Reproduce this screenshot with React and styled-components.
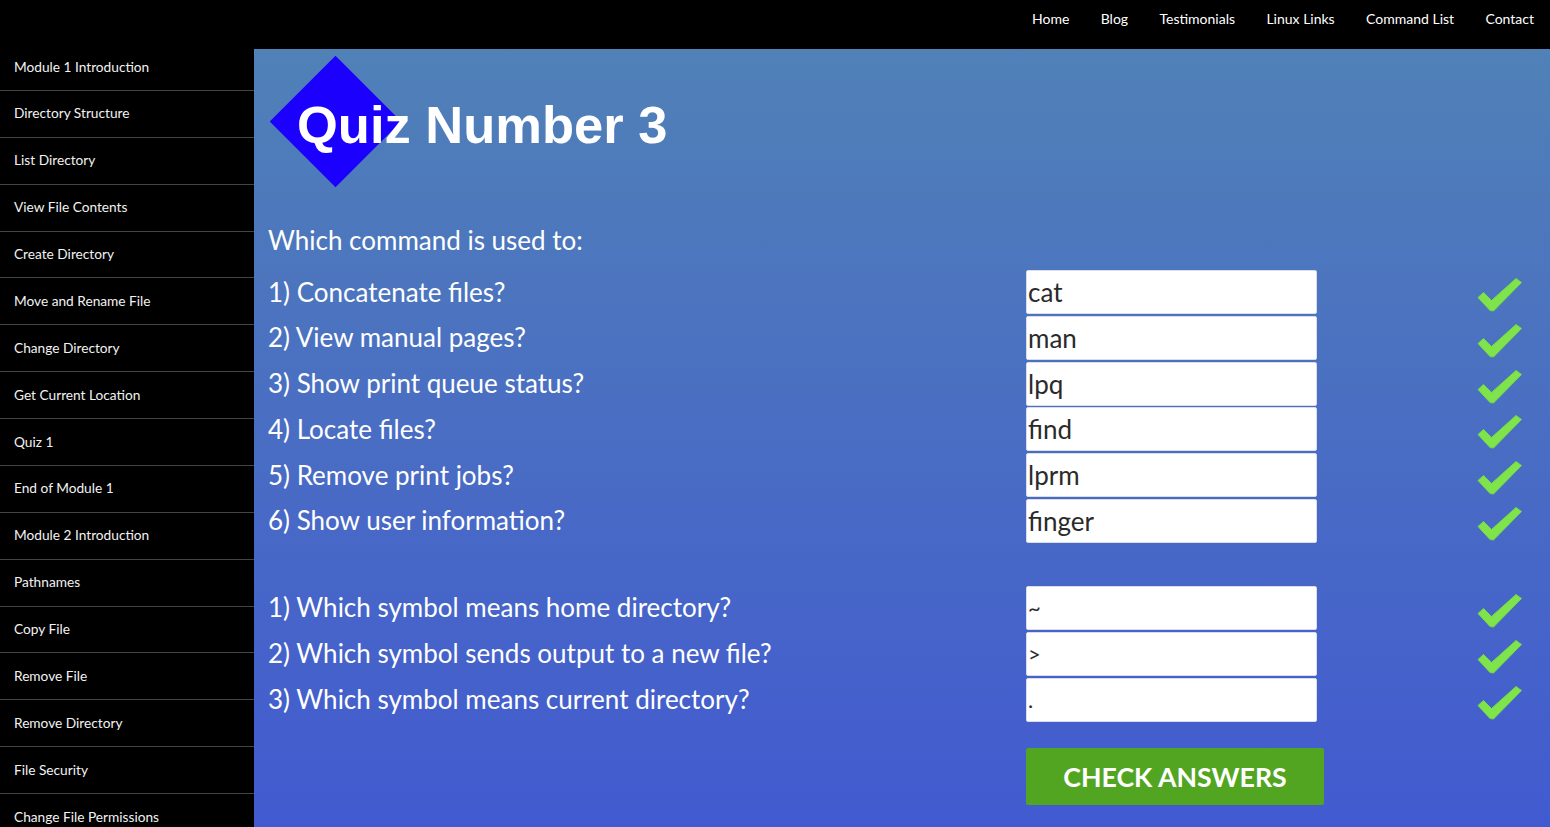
import styled, { createGlobalStyle } from "styled-components";

const GlobalStyle = createGlobalStyle`
  html, body {
    margin: 0;
    padding: 0;
    height: 100%;
    overflow: hidden;
    background: #000;
    font-family: Lato, "Liberation Sans", sans-serif;
  }
  #root {
    height: 100%;
  }
`;

const navLinks = ["Home", "Blog", "Testimonials", "Linux Links", "Command List", "Contact"];

const menu = [
  "Module 1 Introduction",
  "Directory Structure",
  "List Directory",
  "View File Contents",
  "Create Directory",
  "Move and Rename File",
  "Change Directory",
  "Get Current Location",
  "Quiz 1",
  "End of Module 1",
  "Module 2 Introduction",
  "Pathnames",
  "Copy File",
  "Remove File",
  "Remove Directory",
  "File Security",
  "Change File Permissions",
];

const commands = [
  { q: "1) Concatenate files?", a: "cat" },
  { q: "2) View manual pages?", a: "man" },
  { q: "3) Show print queue status?", a: "lpq" },
  { q: "4) Locate files?", a: "find" },
  { q: "5) Remove print jobs?", a: "lprm" },
  { q: "6) Show user information?", a: "finger" },
];

const symbols = [
  { q: "1) Which symbol means home directory?", a: "~", small: true },
  { q: "2) Which symbol sends output to a new file?", a: ">", small: true },
  { q: "3) Which symbol means current directory?", a: ".", small: true },
];

const Tick = () => (
  <svg width="46" height="36" viewBox="0 0 46 36">
    <path
      d="M1 20.5 L6.5 15.5 L14.5 23.5 L39 1.5 L44.5 5.5 L16.5 34 L13 33.5 Z"
      fill="#7fe34b"
      stroke="#76d845"
      strokeWidth="1"
      strokeLinejoin="round"
    />
  </svg>
);

const QuizRow = ({ q, a, small }) => (
  <>
    <Question>{q}</Question>
    <Answer $small={small} readOnly value={a} />
    <Mark>
      <Tick />
    </Mark>
  </>
);

const App = () => {
  return (
    <Page>
      <GlobalStyle />
      <TopBar>
        {navLinks.map((l) => (
          <NavLink key={l}>{l}</NavLink>
        ))}
      </TopBar>
      <Body>
        <Sidebar>
          {menu.map((m) => (
            <MenuItem key={m}>{m}</MenuItem>
          ))}
        </Sidebar>
        <Main>
          <TitleWrap>
            <Title>Quiz Number 3</Title>
          </TitleWrap>
          <Lead>Which command is used to:</Lead>
          <QuizGrid>
            {commands.map((c) => (
              <QuizRow key={c.q} {...c} />
            ))}
          </QuizGrid>
          <QuizGrid $top={43}>
            {symbols.map((c) => (
              <QuizRow key={c.q} {...c} />
            ))}
            <CheckButton>CHECK ANSWERS</CheckButton>
          </QuizGrid>
        </Main>
      </Body>
    </Page>
  );
};
export default App;

const Page = styled.div`
  height: 100vh;
  display: flex;
  flex-direction: column;
  overflow: hidden;
`;

const TopBar = styled.nav`
  height: 49px;
  flex-shrink: 0;
  background: #000;
  display: flex;
  justify-content: flex-end;
  align-items: flex-start;
  padding: 10px 0 0 0;
  box-sizing: border-box;
`;

const NavLink = styled.a`
  color: #fff;
  font-size: 14px;
  line-height: 18px;
  padding: 0 15.7px;
  cursor: pointer;
  &:last-child {
    padding-right: 16px;
  }
`;

const Body = styled.div`
  flex: 1;
  display: flex;
  min-height: 0;
`;

const Sidebar = styled.aside`
  width: 254px;
  flex-shrink: 0;
  background: #000;
  display: flex;
  flex-direction: column;
  overflow: hidden;
  margin-top: -5px;
`;

const MenuItem = styled.a`
  display: block;
  flex-shrink: 0;
  color: #f2f2f2;
  font-size: 13.7px;
  line-height: 16.87px;
  padding: 14.5px 14px;
  border-bottom: 1px solid #444;
  cursor: pointer;
`;

const Main = styled.main`
  flex: 1;
  background: linear-gradient(180deg, #5081b7 0%, #4a6fc2 45%, #425ad0 100%);
  padding: 6px 29px 0 14px;
  box-sizing: border-box;
  overflow: hidden;
`;

const TitleWrap = styled.div`
  position: relative;
  height: 132px;
  display: flex;
  align-items: center;
  padding-left: 29px;
  &::before {
    content: "";
    position: absolute;
    left: 20.5px;
    top: 19.5px;
    width: 93px;
    height: 93px;
    background: #1b00fd;
    transform: rotate(45deg);
  }
`;

const Title = styled.h1`
  position: relative;
  margin: 7px 0 0 0;
  color: #fff;
  font-family: "Liberation Sans", Arial, sans-serif;
  font-weight: 700;
  font-size: 52.5px;
  line-height: 60px;
`;

const Lead = styled.p`
  margin: 38px 0 0 0;
  color: #fff;
  font-size: 26px;
  line-height: 31px;
`;

const QuizGrid = styled.div`
  display: grid;
  grid-template-columns: 758px 291px 1fr;
  grid-auto-rows: auto;
  row-gap: 1.8px;
  align-items: center;
  margin-top: ${(p) => (p.$top ? p.$top : 14)}px;
`;

const Question = styled.div`
  color: #fff;
  font-size: 26px;
  line-height: 31px;
  white-space: nowrap;
`;

const Answer = styled.input`
  box-sizing: border-box;
  width: 291px;
  height: 44px;
  margin: 0;
  border: 1px solid #d8dde8;
  border-radius: 2px;
  background: #fff;
  color: #2a2a2a;
  font-family: Lato, "Liberation Sans", sans-serif;
  font-size: ${(p) => (p.$small ? 22 : 26)}px;
  padding: 0 0 0 1px;
  outline: none;
`;

const Mark = styled.div`
  justify-self: end;
  display: flex;
  align-items: center;
  margin: 6px -2px 0 0;
`;

const CheckButton = styled.button`
  grid-column: 2 / span 2;
  justify-self: start;
  width: 298px;
  height: 57px;
  margin-top: 25px;
  border: none;
  border-radius: 2px;
  background: #52a520;
  color: #fff;
  font-family: Lato, "Liberation Sans", sans-serif;
  font-weight: 700;
  font-size: 26.7px;
  cursor: pointer;
`;
